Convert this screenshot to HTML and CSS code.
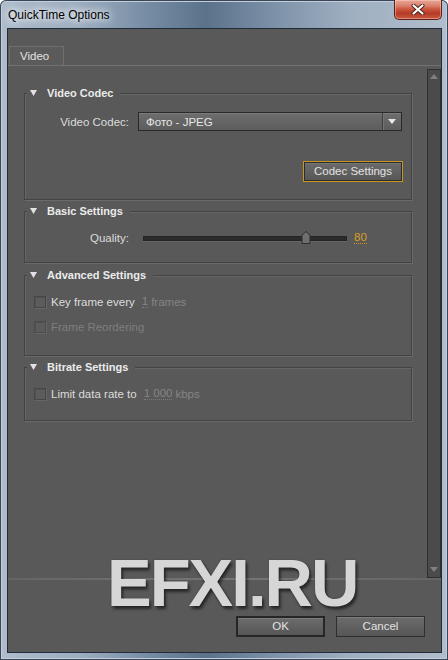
FILE: index.html
```html
<!DOCTYPE html>
<html>
<head>
<meta charset="utf-8">
<title>QuickTime Options</title>
<link rel="stylesheet" href="styles.css">
</head>
<body>
<div class="window">
  <div class="titlebar">
    <div class="title">QuickTime Options</div>
    <div class="close">
      <svg width="14" height="11" viewBox="0 0 14 11">
        <path d="M2.5 1.5 L11.5 9.5 M11.5 1.5 L2.5 9.5" stroke="#4a2018" stroke-width="4" stroke-linecap="round"/>
        <path d="M2.5 1.5 L11.5 9.5 M11.5 1.5 L2.5 9.5" stroke="#ffffff" stroke-width="2.2" stroke-linecap="round"/>
      </svg>
    </div>
  </div>
  <div class="client">
    <div class="tabbar"><div class="tab">Video</div></div>
    <div class="main">
      <div class="scrollarea">
        <div class="group g-codec">
          <div class="ghead"><svg class="tri" width="7" height="6" viewBox="0 0 7 6"><polygon points="0,0 7,0 3.5,6" fill="#e2e2e2"/></svg><span>Video Codec</span></div>
          <div class="row r-codec">
            <span class="lbl">Video Codec:</span>
            <div class="select">
              <span class="sval">Фото - JPEG</span>
              <span class="sarrow"><svg width="8" height="5" viewBox="0 0 8 5"><polygon points="0,0 8,0 4,5" fill="#e8e8e8"/></svg></span>
            </div>
          </div>
          <div class="row r-btn"><div class="btn focus">Codec Settings</div></div>
        </div>
        <div class="group g-basic">
          <div class="ghead"><svg class="tri" width="7" height="6" viewBox="0 0 7 6"><polygon points="0,0 7,0 3.5,6" fill="#e2e2e2"/></svg><span>Basic Settings</span></div>
          <div class="row r-slider">
            <span class="lbl lbl-q">Quality:</span>
            <div class="track">
              <svg class="thumb" width="10" height="13" viewBox="0 0 10 13"><polygon points="5,0.5 9,4 9,12.5 1,12.5 1,4" fill="#6f6f6f" stroke="#2e2e2e" stroke-width="1"/></svg>
            </div>
            <span class="num">80</span>
          </div>
        </div>
        <div class="group g-adv">
          <div class="ghead"><svg class="tri" width="7" height="6" viewBox="0 0 7 6"><polygon points="0,0 7,0 3.5,6" fill="#e2e2e2"/></svg><span>Advanced Settings</span></div>
          <div class="row r-check r-first">
            <span class="cb"></span><span class="ctext">Key frame every</span><span class="dval">1</span><span class="dis">frames</span>
          </div>
          <div class="row r-check r-second">
            <span class="cb cb-dis"></span><span class="ctext dis0">Frame Reordering</span>
          </div>
        </div>
        <div class="group g-bit">
          <div class="ghead"><svg class="tri" width="7" height="6" viewBox="0 0 7 6"><polygon points="0,0 7,0 3.5,6" fill="#e2e2e2"/></svg><span>Bitrate Settings</span></div>
          <div class="row r-check r-first">
            <span class="cb"></span><span class="ctext">Limit data rate to</span><span class="dval">1 000</span><span class="dis">kbps</span>
          </div>
        </div>
      </div>
      <div class="scrollbar">
        <svg width="8" height="5" viewBox="0 0 8 5"><polygon points="4,0 8,5 0,5" fill="#808080"/></svg>
        <svg width="8" height="5" viewBox="0 0 8 5"><polygon points="0,0 8,0 4,5" fill="#808080"/></svg>
      </div>
    </div>
    <div class="sep"></div>
    <div class="footer">
      <div class="btn default">OK</div>
      <div class="btn">Cancel</div>
    </div>
  </div>
  <div class="watermark">EFXI.RU</div>
</div>
</body>
</html>
```
FILE: styles.css
```css
html, body {
  margin: 0;
  padding: 0;
  width: 448px;
  height: 660px;
  overflow: hidden;
  background: #ffffff;
}

.window {
  position: relative;
  width: 448px;
  height: 660px;
  box-sizing: border-box;
  display: flex;
  flex-direction: column;
  border-radius: 6px 6px 0 0;
  background: linear-gradient(90deg, #aebccc 0%, #9cadc0 18%, #6f869e 36%, #5b728b 46%, #7a8fa6 60%, #9fafc1 78%, #b0bdcc 100%);
  box-shadow: inset 0 0 0 1px #3a4556, inset 0 0 0 2px #c3cfdc;
  font-family: "Liberation Sans", Arial, sans-serif;
  font-size: 11.5px;
  overflow: hidden;
}

.titlebar {
  height: 28px;
  display: flex;
  align-items: flex-start;
}

.title {
  margin: 8px 0 0 8px;
  font-size: 12px;
  line-height: 14px;
  color: #000;
  text-shadow: 0 0 6px rgba(255,255,255,0.95), 0 0 10px rgba(255,255,255,0.8), 0 0 14px rgba(255,255,255,0.6);
}

.close {
  margin-left: auto;
  margin-right: 6px;
  width: 48px;
  height: 20px;
  box-sizing: border-box;
  border: 1px solid #5b2219;
  border-top: none;
  border-radius: 0 0 5px 5px;
  background: linear-gradient(#e9a898 0%, #d9816d 30%, #c9533c 50%, #b63a26 70%, #c85a40 100%);
  box-shadow: inset 0 0 0 1px rgba(255,210,200,0.45);
  display: flex;
  align-items: center;
  justify-content: center;
}

.client {
  margin: 0 6px 7px 7px;
  flex: 1;
  border: 1px solid #222c3a;
  background: #595959;
  display: flex;
  flex-direction: column;
  color: #dedede;
}

.tabbar {
  margin-top: 17px;
  padding-left: 1px;
  display: flex;
  border-bottom: 1px solid #717171;
}

.tab {
  width: 55px;
  height: 19px;
  box-sizing: border-box;
  border: 1px solid #6f6f6f;
  border-bottom: none;
  background: #5b5b5b;
  padding-left: 10px;
  line-height: 18px;
  color: #e4e4e4;
}

.main {
  display: flex;
  height: 512px;
}

.scrollarea {
  flex: 1;
  padding: 27px 15px 0 16px;
}

.group {
  box-sizing: border-box;
  border: 1px solid #434343;
  box-shadow: 1px 1px 0 #6a6a6a, inset 1px 1px 0 #666666;
}

.g-codec { height: 107px; }
.g-basic { height: 52px; margin-top: 11px; }
.g-adv { height: 81px; margin-top: 12px; }
.g-bit { height: 54px; margin-top: 11px; }

.ghead {
  display: flex;
  align-items: center;
  width: fit-content;
  height: 14px;
  margin: -8px 0 0 2px;
  padding: 0 7px 0 3px;
  background: #595959;
  font-weight: bold;
  font-size: 11px;
  color: #ebebeb;
}

.tri {
  margin-right: 10px;
  display: block;
}

.row {
  display: flex;
  align-items: center;
}

.lbl {
  width: 104px;
  margin-right: 9px;
  text-align: right;
  color: #dcdcdc;
}

.lbl-q { margin-right: 14px; }

.r-codec { margin-top: 12px; height: 19px; }

.select {
  width: 264px;
  height: 19px;
  box-sizing: border-box;
  border: 1px solid #2a2a2a;
  background: linear-gradient(#6d6d6d, #5d5d5d);
  box-shadow: inset 0 1px 0 #7a7a7a;
  display: flex;
  align-items: center;
}

.sval {
  flex: 1;
  padding-left: 7px;
  color: #e6e6e6;
}

.sarrow {
  width: 18px;
  height: 17px;
  border-left: 1px solid #3c3c3c;
  box-shadow: inset 1px 0 0 #777;
  display: flex;
  align-items: center;
  justify-content: center;
}

.sarrow svg { display: block; }

.r-btn {
  margin-top: 30px;
  justify-content: flex-end;
  padding-right: 8px;
}

.btn {
  height: 21px;
  box-sizing: border-box;
  border: 1px solid #2e2e2e;
  background: linear-gradient(#6c6c6c, #565656);
  box-shadow: inset 0 1px 0 #7b7b7b;
  color: #e2e2e2;
  text-align: center;
  line-height: 19px;
}

.btn.focus {
  width: 100px;
  border: 1px solid #c9961e;
  box-shadow: inset 0 0 0 1px #2c2c2c, inset 0 2px 0 #777;
  line-height: 19px;
}

.r-slider { margin-top: 13px; height: 14px; }

.track {
  position: relative;
  width: 204px;
  height: 5px;
  box-sizing: border-box;
  background: #2b2b2b;
  border: 1px solid #242424;
  box-shadow: 0 1px 0 #666;
}

.thumb {
  position: absolute;
  left: 157px;
  top: -6px;
  display: block;
}

.num {
  margin-left: 7px;
  color: #dc9d1e;
  border-bottom: 1px dotted #d49418;
  line-height: 11px;
}

.r-check { height: 14px; padding-left: 9px; }
.r-first { margin-top: 13px; }
.r-second { margin-top: 11px; }

.cb {
  width: 12px;
  height: 12px;
  box-sizing: border-box;
  border: 1px solid #464646;
  background: #5c5c5c;
  box-shadow: inset 1px 1px 0 #525252, 1px 1px 0 #666;
  margin-right: 5px;
}

.cb-dis { border-color: #4c4c4c; }

.ctext { color: #dcdcdc; }
.dis0 { color: #7e7e7e; }

.dval {
  margin-left: 7px;
  color: #858585;
  border-bottom: 1px dotted #7a7a7a;
  line-height: 11px;
}

.dis {
  margin-left: 3px;
  color: #858585;
}

.scrollbar {
  width: 14px;
  height: 509px;
  margin-top: 3px;
  box-sizing: border-box;
  border: 1px solid #2f2f2f;
  background: #4b4b4b;
  display: flex;
  flex-direction: column;
  align-items: center;
  justify-content: space-between;
  padding: 4px 0 5px;
}

.scrollbar svg { display: block; }

.sep {
  height: 2px;
  background: linear-gradient(90deg, #656565, #767676 50%, #656565);
}

.footer {
  margin-top: 36px;
  display: flex;
  justify-content: flex-end;
  gap: 11px;
  padding-right: 16px;
}

.footer .btn { width: 89px; }

.btn.default {
  border: 2px solid #262626;
  line-height: 17px;
}

.watermark {
  position: absolute;
  left: 107px;
  top: 549px;
  font-family: "Liberation Sans", Arial, sans-serif;
  font-weight: bold;
  font-size: 67px;
  line-height: 67px;
  letter-spacing: -2px;
  color: #d6d6d6;
  text-shadow: 2px 3px 3px rgba(0,0,0,0.55), 0 0 2px rgba(0,0,0,0.3);
  white-space: nowrap;
}
```
